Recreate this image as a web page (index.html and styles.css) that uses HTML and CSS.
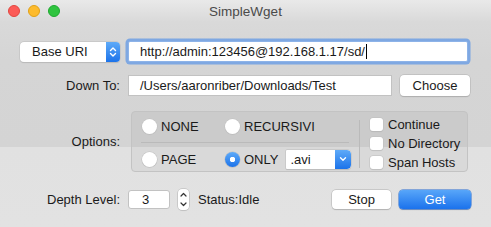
FILE: index.html
```
<!DOCTYPE html>
<html>
<head>
<meta charset="utf-8">
<link rel="stylesheet" href="styles.css">
</head>
<body>
<div class="window">
  <div class="titlebar">
    <div class="lights">
      <span class="light red"></span>
      <span class="light yellow"></span>
      <span class="light green"></span>
    </div>
    <div class="title">SimpleWget</div>
    <div></div>
  </div>
  <div class="content">
    <div class="row row-url">
      <div class="popup base-popup">
        <span class="popup-text">Base URI</span>
        <span class="popup-arrows">
          <svg width="8" height="12" viewBox="0 0 8 12"><path d="M1.5 4.5 L4 2 L6.5 4.5 M1.5 7.5 L4 10 L6.5 7.5" fill="none" stroke="#fff" stroke-width="1.4" stroke-linecap="round" stroke-linejoin="round"/></svg>
        </span>
      </div>
      <div class="field url-field">http://admin:123456@192.168.1.17/sd/<span class="caret"></span></div>
    </div>
    <div class="row row-down">
      <div class="label">Down To:</div>
      <div class="field path-field">/Users/aaronriber/Downloads/Test</div>
      <div class="button choose">Choose</div>
    </div>
    <div class="row row-options">
      <div class="label">Options:</div>
      <div class="options-box">
        <div class="radios">
          <div class="radio-row">
            <div class="radio-item r1"><span class="radio"></span>NONE</div>
            <div class="radio-item"><span class="radio"></span>RECURSIVI</div>
          </div>
          <div class="hsep"></div>
          <div class="radio-row">
            <div class="radio-item r1"><span class="radio"></span>PAGE</div>
            <div class="radio-item"><span class="radio on"></span>ONLY
              <div class="popup avi-popup">
                <span class="popup-text">.avi</span>
                <span class="popup-arrows">
                  <svg width="8" height="8" viewBox="0 0 8 8"><path d="M1.5 2.8 L4 5.3 L6.5 2.8" fill="none" stroke="#fff" stroke-width="1.4" stroke-linecap="round" stroke-linejoin="round"/></svg>
                </span>
              </div>
            </div>
          </div>
        </div>
        <div class="vsep"></div>
        <div class="checks">
          <div class="check-item"><span class="check"></span>Continue</div>
          <div class="check-item"><span class="check"></span>No Directory</div>
          <div class="check-item"><span class="check"></span>Span Hosts</div>
        </div>
      </div>
    </div>
    <div class="row row-depth">
      <div class="label">Depth Level:</div>
      <div class="field depth-field">3</div>
      <div class="stepper">
        <svg width="11" height="21" viewBox="0 0 11 21"><path d="M3 7 L5.5 4.5 L8 7 M3 14 L5.5 16.5 L8 14" fill="none" stroke="#333" stroke-width="1.2" stroke-linecap="round" stroke-linejoin="round"/></svg>
      </div>
      <div class="status">Status:Idle</div>
      <div class="spacer"></div>
      <div class="button stop">Stop</div>
      <div class="button get">Get</div>
    </div>
  </div>
</div>
</body>
</html>
```
FILE: styles.css
```
* { box-sizing: border-box; }
html, body { margin: 0; padding: 0; }
body {
  width: 491px;
  height: 227px;
  overflow: hidden;
  font-family: "Liberation Sans", Arial, sans-serif;
  font-size: 13px;
  color: #1a1a1a;
  background: #d6d6d6;
}
.window {
  width: 491px;
  height: 227px;
  background: linear-gradient(#e9e9e9 0px, #d9d9d9 22px, #d5d5d5 60px, #d4d4d4 147px, #e1e1e1 147px, #e2e2e2 227px);
}
.titlebar {
  height: 22px;
  display: grid;
  grid-template-columns: 1fr auto 1fr;
  align-items: center;
}
.lights {
  display: flex;
  gap: 8px;
  padding-left: 8px;
}
.light {
  width: 12px;
  height: 12px;
  border-radius: 50%;
  display: block;
}
.red { background: #fc5b57; border: 0.5px solid #e2463f; }
.yellow { background: #fdbb2d; border: 0.5px solid #e1a116; }
.green { background: #2fc43f; border: 0.5px solid #1ea930; }
.title {
  text-align: center;
  color: #4a4a4a;
  font-size: 13.5px;
}
.content {
  padding-top: 19px;
}
.row {
  display: flex;
  align-items: center;
}
.label {
  width: 120px;
  text-align: right;
  margin-right: 8px;
  color: #1a1a1a;
}
.row-url {
  padding-left: 20px;
  height: 21px;
}
.popup {
  display: flex;
  align-items: stretch;
  background: #fff;
  border-radius: 4px;
  box-shadow: 0 0 0 0.5px #bdbdbd, 0 0.5px 1px rgba(0,0,0,0.15);
  overflow: hidden;
}
.base-popup {
  width: 100px;
  height: 20px;
  margin-right: 8px;
}
.popup-text {
  flex: 1;
  display: flex;
  align-items: center;
  padding-left: 12px;
}
.popup-arrows {
  width: 14px;
  display: flex;
  align-items: center;
  justify-content: center;
  background: linear-gradient(#5eaaf8, #1c73ea);
}
.field {
  background: #fff;
  border: 1px solid #c2c2c2;
  display: flex;
  align-items: center;
  padding-left: 11px;
}
.url-field {
  width: 340px;
  height: 21px;
  border-color: #8db3e8;
  box-shadow: 0 0 0 2.5px rgba(98, 152, 230, 0.75);
  border-radius: 2px;
}
.caret {
  display: inline-block;
  width: 1px;
  height: 15px;
  background: #000;
  margin-left: 1px;
}
.row-down {
  margin-top: 12px;
  height: 22px;
}
.path-field {
  width: 264px;
  height: 21px;
  margin-right: 8px;
}
.button {
  display: flex;
  align-items: center;
  justify-content: center;
  background: #fff;
  border-radius: 4px;
  box-shadow: 0 0 0 0.5px #b4b4b4, 0 0.5px 1px rgba(0,0,0,0.2);
}
.choose {
  width: 70px;
  height: 21px;
}
.row-options {
  margin-top: 15px;
  height: 61px;
}
.row-options .label { margin-right: 11px; }
.options-box {
  width: 337px;
  height: 61px;
  background: linear-gradient(#cbcbcb 0, #cbcbcb 35px, #d9d9d9 35px, #d9d9d9 100%);
  border: 1px solid #c3c3c3;
  border-radius: 4px;
  display: flex;
}
.radios {
  width: 227px;
  padding-left: 10px;
  padding-top: 6px;
}
.radio-row {
  display: flex;
  align-items: center;
  height: 16px;
}
.radio-item {
  display: flex;
  align-items: center;
  gap: 4px;
}
.r1 { width: 83px; }
.radio {
  width: 15px;
  height: 15px;
  border-radius: 50%;
  background: #fff;
  box-shadow: 0 0 0 0.5px #c0c0c0, 0 0.5px 1px rgba(0,0,0,0.12);
  display: block;
}
.radio.on {
  background: radial-gradient(circle, #fff 0 2.5px, transparent 3px), linear-gradient(#5eaaf8, #1c73ea);
}
.hsep {
  height: 1px;
  background: #bababa;
  margin: 8px 10px 8px -1px;
}
.avi-popup {
  width: 65px;
  height: 19px;
  margin-left: 4px;
  border-radius: 1px 4px 4px 1px;
}
.avi-popup .popup-text { padding-left: 4px; }
.avi-popup .popup-arrows { width: 16px; border-radius: 0 4px 4px 0; }
.vsep {
  width: 1px;
  background: #bababa;
  margin: 8px 0 3px 0;
}
.checks {
  padding-left: 10px;
  padding-top: 5px;
  display: flex;
  flex-direction: column;
  gap: 5px;
}
.check-item {
  display: flex;
  align-items: center;
  gap: 5px;
  height: 14px;
}
.check {
  width: 13px;
  height: 13px;
  background: #fff;
  border-radius: 3px;
  box-shadow: 0 0 0 0.5px #c0c0c0, 0 0.5px 1px rgba(0,0,0,0.12);
  display: block;
}
.row-depth {
  margin-top: 17px;
  height: 20px;
  padding-right: 20px;
}
.depth-field {
  width: 42px;
  height: 19px;
  border-radius: 3px;
  padding-left: 13px;
  margin-right: 8px;
}
.stepper {
  width: 11px;
  height: 21px;
  background: #fff;
  border-radius: 4px;
  box-shadow: 0 0 0 0.5px #b4b4b4, 0 0.5px 1px rgba(0,0,0,0.15);
  display: flex;
  margin-right: 9px;
}
.spacer { flex: 1; }
.stop {
  width: 59px;
  height: 19px;
  margin-right: 8px;
}
.get {
  width: 72px;
  height: 19px;
  color: #fff;
  background: linear-gradient(#58a6f9, #1b72ec);
  box-shadow: 0 0 0 0.5px #2a6fd6, 0 0.5px 1px rgba(0,0,0,0.25);
}
```
